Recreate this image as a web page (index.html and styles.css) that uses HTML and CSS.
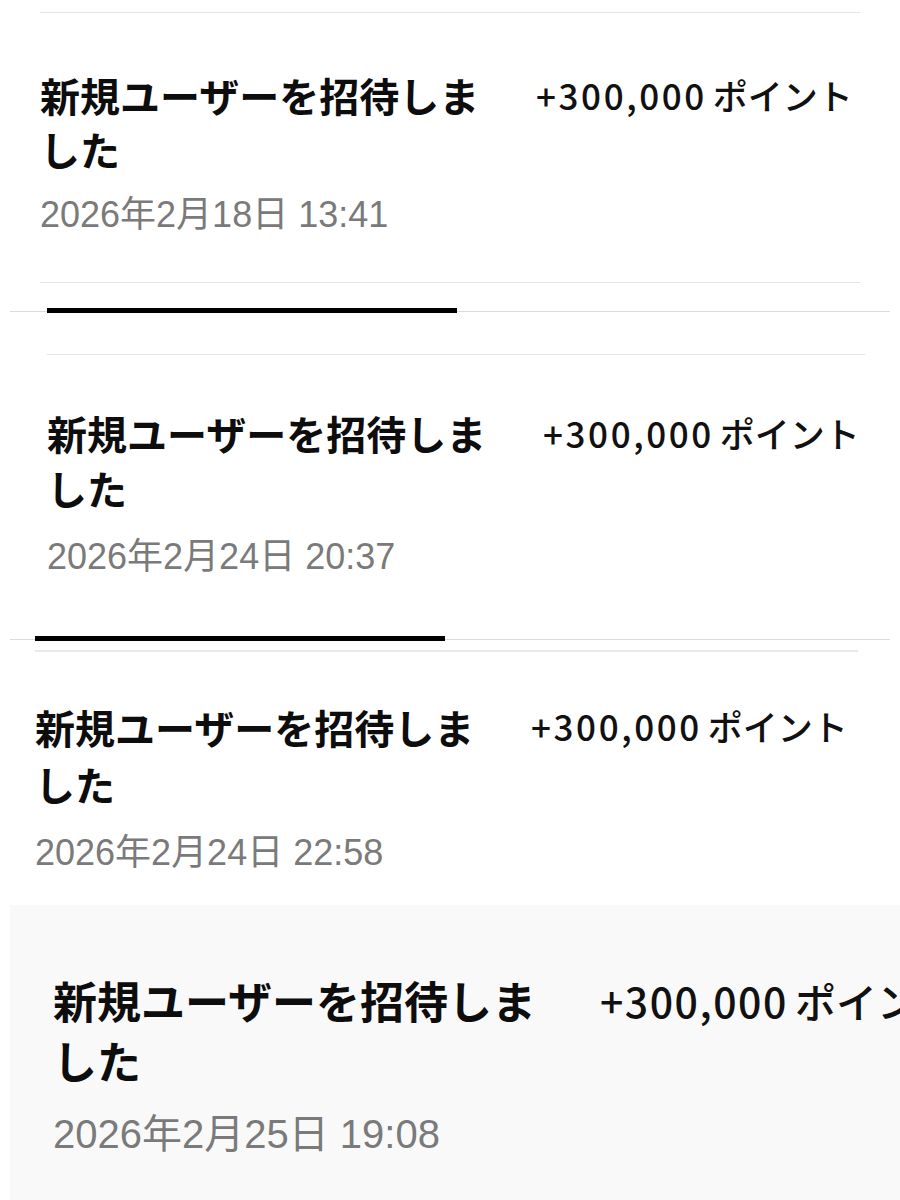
FILE: index.html
```html
<!DOCTYPE html>
<html lang="ja">
<head>
<meta charset="utf-8">
<title>ポイント履歴</title>
<link rel="stylesheet" href="styles.css">
</head>
<body>
<main class="collage">
  <section class="shot shot--a">
    <div class="rule"></div>
    <div class="entry">
      <p class="title">新規ユーザーを招待しました</p>
      <p class="points"><span class="num">+300,000</span> ポイント</p>
    </div>
    <p class="date">2026年2月18日 13:41</p>
    <div class="rule rule--end"></div>
  </section>

  <div class="tabline tabline--a"><div class="tabbar"></div></div>

  <section class="shot shot--b">
    <div class="rule"></div>
    <div class="entry">
      <p class="title">新規ユーザーを招待しました</p>
      <p class="points"><span class="num">+300,000</span> ポイント</p>
    </div>
    <p class="date">2026年2月24日 20:37</p>
  </section>

  <div class="tabline tabline--b"><div class="tabbar"></div></div>

  <section class="shot shot--c">
    <div class="rule"></div>
    <div class="entry">
      <p class="title">新規ユーザーを招待しました</p>
      <p class="points"><span class="num">+300,000</span> ポイント</p>
    </div>
    <p class="date">2026年2月24日 22:58</p>
  </section>

  <section class="shot shot--d">
    <div class="entry">
      <p class="title">新規ユーザーを招待しました</p>
      <p class="points"><span class="num">+300,000</span> ポイント</p>
    </div>
    <p class="date">2026年2月25日 19:08</p>
  </section>
</main>
</body>
</html>
```

FILE: styles.css
```css
html, body {
  margin: 0;
  padding: 0;
  background: #ffffff;
}

body {
  width: 900px;
  height: 1200px;
  overflow: hidden;
  font-family: "Noto Sans CJK JP", "Noto Sans", sans-serif;
  color: #111111;
}

.collage {
  display: flex;
  flex-direction: column;
}

p {
  margin: 0;
}

.shot {
  display: flex;
  flex-direction: column;
}

.rule {
  height: 1px;
  background: #e4e4e6;
}

.entry {
  display: grid;
  grid-template-columns: 496px auto;
  align-items: start;
}

.title {
  max-width: 456px;
  font-size: 40px;
  font-weight: 700;
  line-height: 54px;
  color: #0d0d0d;
}

.points {
  font-size: 35px;
  font-weight: 500;
  line-height: 54px;
  white-space: nowrap;
  color: #111111;
}

.points .num {
  letter-spacing: 2.6px;
  margin-right: -2px;
}

.date {
  font-family: "Liberation Sans", "Noto Sans CJK JP", sans-serif;
  font-size: 36px;
  line-height: 40px;
  color: #7a7a7a;
}

/* shot A */
.shot--a {
  padding: 12px 40px 0 40px;
}
.shot--a .entry {
  margin-top: 55px;
}
.shot--a .date {
  margin-top: 19px;
}
.shot--a .rule--end {
  margin-top: 47px;
}

/* tab indicator lines between shots */
.tabline {
  height: 5px;
  margin: 0 10px;
  background: linear-gradient(#dcdcdc, #dcdcdc) left 3px / 100% 1px no-repeat;
}
.tabbar {
  width: 410px;
  height: 5px;
  background: #000000;
}
.tabline--a {
  margin-top: 25px;
}
.tabline--a .tabbar {
  margin-left: 37px;
}
.tabline--b {
  margin-top: 59px;
}
.tabline--b .tabbar {
  margin-left: 25px;
}

/* shot B */
.shot--b {
  margin-top: 41px;
  padding: 0 35px 0 47px;
}
.shot--b .entry {
  margin-top: 51px;
}
.shot--b .title {
  line-height: 55px;
}
.shot--b .date {
  margin-top: 21px;
}

/* shot C */
.shot--c {
  margin-top: 9px;
  padding: 0 42px 0 35px;
}
.shot--c .rule {
  height: 2px;
  background: #e8e8ec;
}
.shot--c .entry {
  margin-top: 47px;
}
.shot--c .title {
  line-height: 57px;
}
.shot--c .date {
  margin-top: 20px;
}

/* shot D */
.shot--d {
  margin-top: 32px;
  margin-left: 10px;
  padding: 65px 0 0 43px;
  min-height: 240px;
  background: #f9f9f9;
  overflow: hidden;
}
.shot--d .entry {
  grid-template-columns: 547px auto;
}
.shot--d .title {
  max-width: 500px;
  font-size: 44px;
  line-height: 60px;
}
.shot--d .points {
  font-size: 41px;
  line-height: 60px;
}
.shot--d .points .num {
  letter-spacing: 1.5px;
}
.shot--d .date {
  margin-top: 22px;
  font-size: 40px;
  line-height: 44px;
}
```
